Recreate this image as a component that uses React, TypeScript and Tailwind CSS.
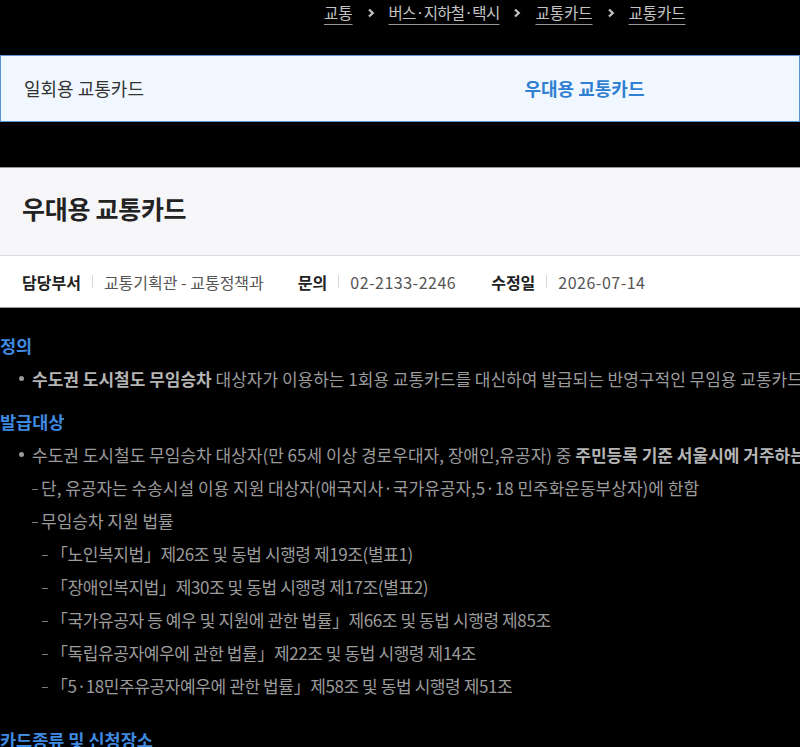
import React from "react";

const font = { fontFamily: '"Noto Sans CJK KR", "Noto Sans", sans-serif' };

function Chevron() {
  return (
    <svg width="10" height="10" viewBox="0 0 10 10" className="mx-[13px] shrink-0 text-[#c4c4c4]">
      <path d="M3 1.5 L6.8 5 L3 8.5" fill="none" stroke="currentColor" strokeWidth="2.2" />
    </svg>
  );
}

function Dash() {
  return <span className="inline-block w-[6px] h-[1px] bg-[#7a7a7a] mr-[3px] align-middle relative -top-[1px]" />;
}

function Dot() {
  return <span className="ml-[19px] mr-[8px] w-[5px] h-[5px] shrink-0 rounded-full bg-[#999]" />;
}

export default function App() {
  const crumbs = ["교통", "버스·지하철·택시", "교통카드", "교통카드"];
  const laws = [
    "「노인복지법」제26조 및 동법 시행령 제19조(별표1)",
    "「장애인복지법」제30조 및 동법 시행령 제17조(별표2)",
    "「국가유공자 등 예우 및 지원에 관한 법률」제66조 및 동법 시행령 제85조",
    "「독립유공자예우에 관한 법률」제22조 및 동법 시행령 제14조",
    "「5·18민주유공자예우에 관한 법률」제58조 및 동법 시행령 제51조",
  ];
  return (
    <div className="w-[800px] h-[747px] bg-black overflow-hidden" style={font}>
      {/* breadcrumb */}
      <div className="flex items-center pl-[324px] h-[26px] text-[15.5px] text-[#c4c4c4] whitespace-nowrap">
        {crumbs.map((c, i) => (
          <React.Fragment key={i}>
            {i > 0 && <Chevron />}
            <span
              className={
                "underline underline-offset-[5px] decoration-[#9a9a9a] leading-none shrink-0" +
                (i === 1 ? " tracking-[-0.7px]" : "")
              }
            >
              {c}
            </span>
          </React.Fragment>
        ))}
      </div>

      {/* tabs */}
      <div className="mt-[29px] h-[67px] border border-[#5a95d6] bg-[#f1f7ff] flex items-center text-[18px]">
        <div className="w-[369px] pl-[23px] text-[#333]">일회용 교통카드</div>
        <div className="flex-1 text-center font-bold text-[#2f7fd3]">우대용 교통카드</div>
      </div>

      {/* card */}
      <div className="mt-[45px] border-t border-b border-[#9a9a9a]">
        <div className="h-[88px] bg-[#f6f6f8] border-b border-[#dcdcdc] flex items-center pl-[22px] pb-[6px]">
          <h1 className="text-[25px] font-bold text-[#222] tracking-[-0.3px]">우대용 교통카드</h1>
        </div>
        <div className="h-[51px] bg-white flex items-center pl-[22px] text-[16px] whitespace-nowrap">
          <span className="font-bold text-[#222]">담당부서</span>
          <span className="mx-[11px] w-px h-[13px] bg-[#d8d8d8]" />
          <span className="text-[#555]">교통기획관 - 교통정책과</span>
          <span className="ml-[34px] font-bold text-[#222]">문의</span>
          <span className="mx-[11px] w-px h-[13px] bg-[#d8d8d8]" />
          <span className="text-[#555] tracking-[0.5px]">02-2133-2246</span>
          <span className="ml-[35px] font-bold text-[#222]">수정일</span>
          <span className="mx-[11px] w-px h-[13px] bg-[#d8d8d8]" />
          <span className="text-[#555] tracking-[0.5px]">2026-07-14</span>
        </div>
      </div>

      {/* content */}
      <div className="whitespace-nowrap text-[17px] text-[#9b9b9b] leading-[33px]">
        <h2 className="mt-[21px] text-[17.5px] font-bold text-[#3e8ae0] leading-[33px]">정의</h2>
        <div className="flex items-center">
          <Dot />
          <span className="shrink-0">
            <b className="text-[#b5b5b5]">수도권 도시철도 무임승차</b> 대상자가 이용하는 1회용 교통카드를 대신하여 발급되는 반영구적인 무임용 교통카드
          </span>
        </div>
        <h2 className="mt-[10px] text-[17.5px] font-bold text-[#3e8ae0] leading-[33px]">발급대상</h2>
        <div className="flex items-center">
          <Dot />
          <span className="shrink-0">
            수도권 도시철도 무임승차 대상자(만 65세 이상 경로우대자, 장애인,유공자) 중{" "}
            <b className="text-[#b5b5b5]">주민등록 기준 서울시에 거주하는</b>
          </span>
        </div>
        <div className="pl-[32px]">
          <Dash />단, 유공자는 수송시설 이용 지원 대상자(애국지사·국가유공자,5·18 민주화운동부상자)에 한함
        </div>
        <div className="pl-[32px]">
          <Dash />무임승차 지원 법률
        </div>
        {laws.map((l, i) => (
          <div key={i} className="pl-[42px] tracking-[-0.4px]">
            <Dash />
            {l}
          </div>
        ))}
        <h2 className="mt-[21px] text-[17.5px] font-bold text-[#3e8ae0] leading-[33px]">카드종류 및 신청장소</h2>
      </div>
    </div>
  );
}
